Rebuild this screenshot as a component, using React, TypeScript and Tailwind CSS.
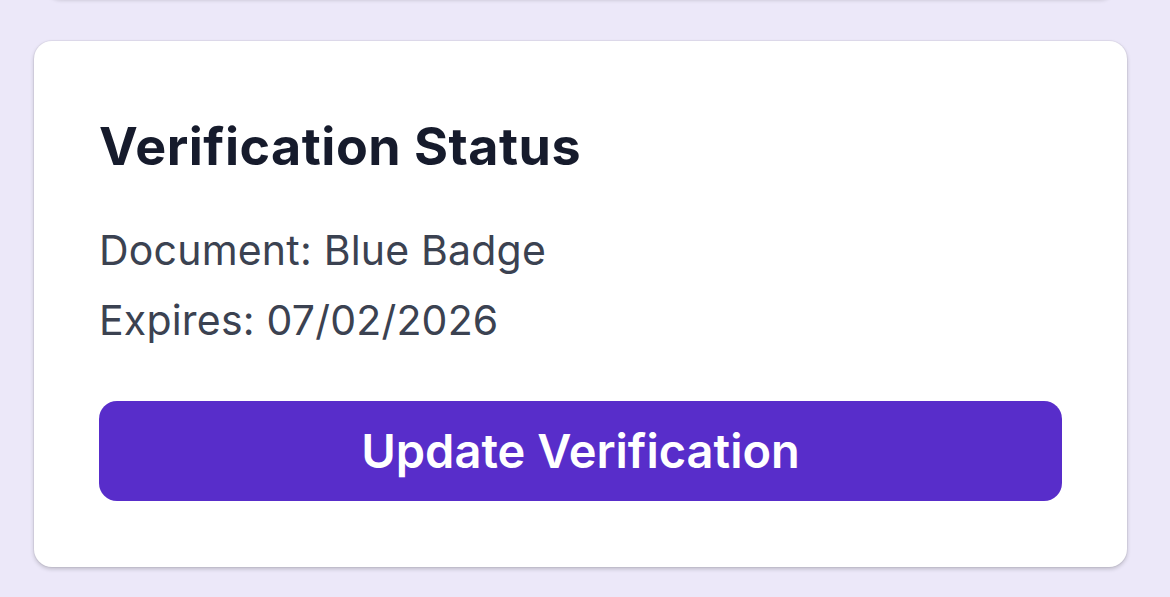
export default function App() {
  return (
    <div
      className="min-h-[597px] w-[1170px] overflow-hidden bg-[#ece8f9] pl-[34px] pr-[43px]"
      style={{ fontFamily: "Inter, 'Noto Sans', sans-serif" }}
    >
      <div className="mx-[10px] mt-[-200px] h-[198px] rounded-[18px] bg-white shadow-[0_2px_4px_rgba(0,0,0,0.18)]" />
      <div className="mt-[43px] rounded-[18px] bg-white pl-[65px] pr-[65px] pb-[66px] pt-[76px] shadow-[0_2px_4px_rgba(0,0,0,0.2),0_0_0_1px_rgba(0,0,0,0.04)]">
        <h2 className="text-[52px] leading-[60px] font-bold tracking-[0.5px] text-[#161b2c]">Verification Status</h2>
        <div className="mt-[48px] flex flex-col gap-[20px] text-[41px] leading-[50px] tracking-[0.2px] text-[#3b4251]">
          <p>Document: Blue Badge</p>
          <p>Expires: 07/02/2026</p>
        </div>
        <button className="mt-[56px] flex h-[100px] w-full items-center justify-center rounded-[18px] bg-[#582dca] text-[47px] font-semibold text-white">
          Update Verification
        </button>
      </div>
    </div>
  );
}
